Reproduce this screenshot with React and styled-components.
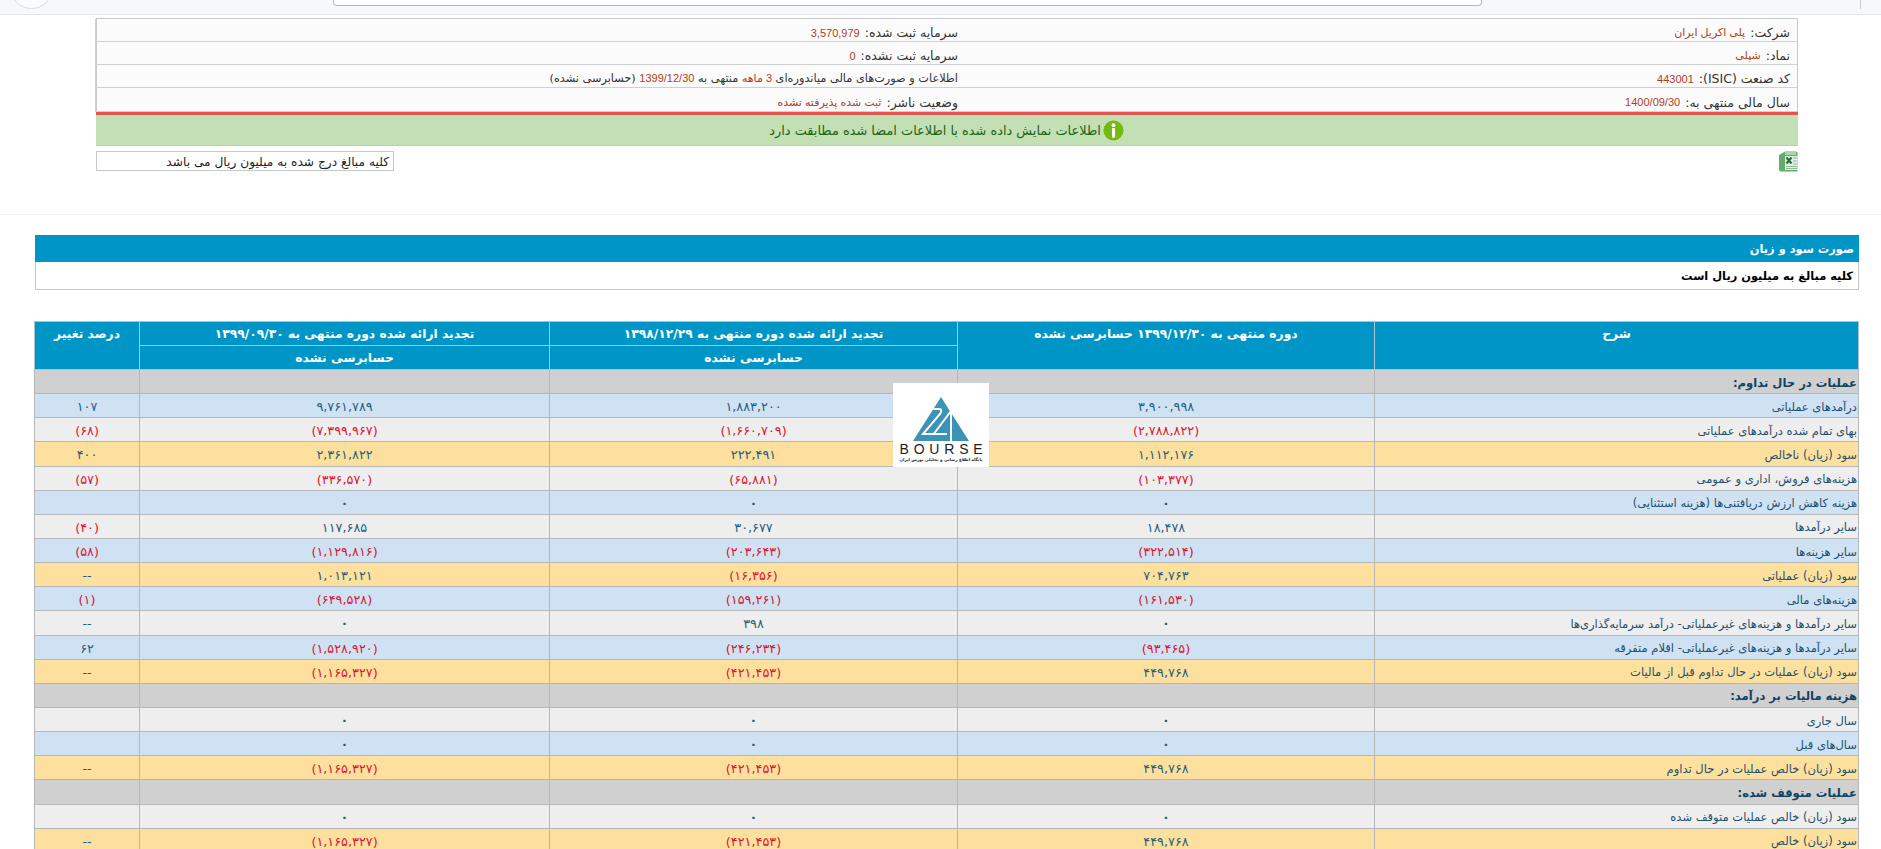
import React from 'react';
import styled, { createGlobalStyle } from 'styled-components';

const GlobalStyle = createGlobalStyle`
    html, body {
        margin: 0;
        padding: 0;
        height: 100%;
        overflow: hidden;
        background: #fff;
    }
    body {
        font-family: "DejaVu Sans", "Liberation Sans", sans-serif;
    }
`

const Page = styled.div`
    width: 1881px;
    height: 849px;
    overflow: hidden;
    direction: rtl;
    position: relative;
`

const BrowserBar = styled.div`
    height: 14px;
    background: #f7f8f9;
    border-bottom: 1px solid #e2e4e6;
    direction: ltr;
    padding-left: 333px;
    position: relative;
    overflow: hidden;
`

const SearchBox = styled.div`
    width: 1147px;
    height: 5px;
    background: #fff;
    border: 1px solid #b4b6b8;
    border-top: none;
    border-radius: 0 0 4px 4px;
`

const RoundButton = styled.div`
    position: absolute;
    left: 10px;
    top: -34px;
    width: 41px;
    height: 41px;
    border: 1px solid #d9dbdd;
    border-radius: 50%;
    background: #fbfbfb;
`

const BarTick = styled.div`
    position: absolute;
    left: 1860px;
    top: 0;
    width: 1px;
    height: 9px;
    background: #c9cbcd;
`

const InfoSection = styled.section`
    margin: 3px 83px 0 96px;
`

const InfoGrid = styled.div`
    display: grid;
    grid-template-columns: 834px 868px;
    grid-template-rows: 23px 23px 23px 24px;
    background: #fbfbfb;
    border: 1px solid #c8c9ca;
    border-bottom: none;
`

const InfoCell = styled.div`
    font-size: 12.5px;
    color: #333;
    display: flex;
    align-items: center;
    gap: 5px;
    padding: 5px ${(p) => (p.$first ? '5px' : '7px')} 0 0;
    border-bottom: 1px solid #cfd0d1;
    border-left: ${(p) => (p.$first ? '1px solid #cfd0d1' : 'none')};
    white-space: nowrap;
`

const InfoValue = styled.span`
    color: #b0401c;
    font-family: "Liberation Sans", "DejaVu Sans", sans-serif;
    font-size: 11px;
`

const InfoText = styled.span`
    font-size: 11.3px;
    color: #333;
`

const RedLine = styled.div`
    height: 3px;
    background: #e2554f;
`

const GreenBar = styled.div`
    height: 30px;
    background: #c2e0b4;
    border-bottom: 1px solid #b6d2a9;
    display: flex;
    align-items: center;
    justify-content: center;
    gap: 2px;
    color: #1f6314;
    font-size: 12.9px;
    padding-right: 1px;
`

const ToolRow = styled.div`
    display: flex;
    justify-content: space-between;
    align-items: flex-start;
    margin-top: 5px;
`

const AmountNote = styled.div`
    width: 298px;
    height: 20px;
    border: 1px solid #c8c9ca;
    background: #fff;
    font-size: 12.2px;
    color: #222;
    line-height: 21px;
    padding-right: 4px;
    box-sizing: border-box;
    white-space: nowrap;
    overflow: hidden;
`

const Divider = styled.hr`
    border: none;
    border-top: 1px solid #eeeeee;
    margin: 42px 0 0;
`

const ReportSection = styled.section`
    margin: 20px 22px 0 35px;
`

const TitleBar = styled.div`
    height: 27px;
    background: #0095c7;
    color: #fff;
    font-size: 11.4px;
    font-weight: bold;
    display: flex;
    align-items: center;
    padding-right: 5px;
`

const SubTitle = styled.div`
    height: 27px;
    border: 1px solid #c4c6c8;
    border-top: none;
    color: #000;
    font-size: 11.4px;
    font-weight: bold;
    display: flex;
    align-items: center;
    padding-right: 5px;
`

const Table = styled.table`
    margin-top: 31px;
    width: 1824px;
    border-collapse: collapse;
    table-layout: fixed;
`

const HeadCell = styled.th`
    background: #0095c7;
    color: #fff;
    font-size: 12.3px;
    font-weight: bold;
    line-height: 16px;
    height: 24px;
    padding: 4px 0 3px;
    box-sizing: border-box;
    border: 1px solid #a9c4d0;
    vertical-align: top;
`

const ROW_COLORS = {
    group: '#d0d0d0',
    blue: '#cfe2f3',
    grey: '#eeeeee',
    gold: '#fde09e',
};

const Row = styled.tr`
    height: 24.15px;
    background: ${(p) => ROW_COLORS[p.$kind]};
`

const LabelCell = styled.td`
    border: 1px solid #b5b7b9;
    padding: 2px 1px 0 0;
    font-size: ${(p) => (p.$group ? '11.6px' : '11.5px')};
    font-weight: ${(p) => (p.$group ? 'bold' : 'normal')};
    color: ${(p) => (p.$group ? '#0f4561' : '#23506c')};
    white-space: nowrap;
    overflow: hidden;
`

const NumCell = styled.td`
    border: 1px solid #b5b7b9;
    padding: 2px 0 0;
    text-align: center;
    font-size: 12.8px;
    font-weight: ${(p) => (p.$zero ? 'bold' : 'normal')};
    color: ${(p) => (p.$neg ? '#e0142e' : '#23607c')};
    white-space: nowrap;
`

const LogoBox = styled.div`
    position: absolute;
    left: 893px;
    top: 383px;
    width: 96px;
    height: 84px;
    background: #fff;
    display: flex;
    flex-direction: column;
    align-items: center;
    direction: ltr;
`

const LogoWord = styled.div`
    font-family: "Liberation Sans", sans-serif;
    font-size: 14px;
    line-height: 12px;
    letter-spacing: 4.8px;
    margin-right: -5px;
    color: #1d1d1d;
    margin-top: 1px;
`

const LogoCaption = styled.div`
    direction: rtl;
    font-size: 4.1px;
    font-weight: bold;
    color: #222;
    margin-top: 2px;
    white-space: nowrap;
`

const rows = [
    ['group', 'عملیات در حال تداوم:'],
    ['blue', 'درآمدهای عملیاتی', '۳,۹۰۰,۹۹۸', '۱,۸۸۳,۲۰۰', '۹,۷۶۱,۷۸۹', '۱۰۷'],
    ['grey', 'بهای تمام شده درآمدهای عملیاتی', '(۲,۷۸۸,۸۲۲)', '(۱,۶۶۰,۷۰۹)', '(۷,۳۹۹,۹۶۷)', '(۶۸)'],
    ['gold', 'سود (زیان) ناخالص', '۱,۱۱۲,۱۷۶', '۲۲۲,۴۹۱', '۲,۳۶۱,۸۲۲', '۴۰۰'],
    ['grey', 'هزینه‌های فروش، اداری و عمومی', '(۱۰۳,۳۷۷)', '(۶۵,۸۸۱)', '(۳۳۶,۵۷۰)', '(۵۷)'],
    ['blue', 'هزینه کاهش ارزش دریافتنی‌ها (هزینه استثنایی)', '۰', '۰', '۰', ''],
    ['grey', 'سایر درآمدها', '۱۸,۴۷۸', '۳۰,۶۷۷', '۱۱۷,۶۸۵', '(۴۰)'],
    ['blue', 'سایر هزینه‌ها', '(۳۲۲,۵۱۴)', '(۲۰۳,۶۴۳)', '(۱,۱۲۹,۸۱۶)', '(۵۸)'],
    ['gold', 'سود (زیان) عملیاتی', '۷۰۴,۷۶۳', '(۱۶,۳۵۶)', '۱,۰۱۳,۱۲۱', '--'],
    ['blue', 'هزینه‌های مالی', '(۱۶۱,۵۳۰)', '(۱۵۹,۲۶۱)', '(۶۴۹,۵۲۸)', '(۱)'],
    ['grey', 'سایر درآمدها و هزینه‌های غیرعملیاتی- درآمد سرمایه‌گذاری‌ها', '۰', '۳۹۸', '۰', '--'],
    ['blue', 'سایر درآمدها و هزینه‌های غیرعملیاتی- اقلام متفرقه', '(۹۳,۴۶۵)', '(۲۴۶,۲۳۴)', '(۱,۵۲۸,۹۲۰)', '۶۲'],
    ['gold', 'سود (زیان) عملیات در حال تداوم قبل از مالیات', '۴۴۹,۷۶۸', '(۴۲۱,۴۵۳)', '(۱,۱۶۵,۳۲۷)', '--'],
    ['group', 'هزینه مالیات بر درآمد:'],
    ['grey', 'سال جاری', '۰', '۰', '۰', ''],
    ['blue', 'سال‌های قبل', '۰', '۰', '۰', ''],
    ['gold', 'سود (زیان) خالص عملیات در حال تداوم', '۴۴۹,۷۶۸', '(۴۲۱,۴۵۳)', '(۱,۱۶۵,۳۲۷)', '--'],
    ['group', 'عملیات متوقف شده:'],
    ['grey', 'سود (زیان) خالص عملیات متوقف شده', '۰', '۰', '۰', ''],
    ['gold', 'سود (زیان) خالص', '۴۴۹,۷۶۸', '(۴۲۱,۴۵۳)', '(۱,۱۶۵,۳۲۷)', '--'],
];

function InfoIcon() {
    return (
        <svg width="21" height="21" viewBox="0 0 22 22">
            <circle cx="11" cy="11" r="10.5" fill="#75b80f" />
            <circle cx="11" cy="5.5" r="2" fill="#fff" />
            <rect x="9.4" y="8.5" width="3.2" height="10" rx="1" fill="#fff" />
        </svg>
    );
}

function ExcelIcon() {
    return (
        <svg width="20" height="21" viewBox="0 0 20 21">
            <path d="M1 4 L7 0.5 H18 Q19.5 0.5 19.5 2 V20.5 H3 Q1 20.5 1 18 Z" fill="#63ad6c" />
            <path d="M7 1 H18 V4 H7 Z" fill="#a9d6ab" />
            <rect x="7" y="5" width="12.5" height="14" fill="#e6efe7" />
            <path d="M8.5 6.5 L13.5 12.5 M13.5 6.5 L8.5 12.5" stroke="#1d6b38" strokeWidth="2" />
            <path d="M15 7 H19 M15 10 H19 M15 13 H19 M8 15.5 H19 M8 17.5 H19" stroke="#8dbb97" strokeWidth="1.1" />
        </svg>
    );
}

function LogoMark() {
    return (
        <svg width="56" height="45" viewBox="0 0 56 45" style={{ marginTop: 14 }}>
            <path d="M28 0 L56 44 H0 Z" fill="#3b93b5" />
            <path d="M16 12 H26 Q30 12 27 17 L10 37 H24" fill="none" stroke="#fff" strokeWidth="2" />
            <path d="M20 38 L38 14 V44 M24 37 H34" fill="none" stroke="#fff" strokeWidth="2" />
        </svg>
    );
}

export default function App() {
    return (
        <Page>
            <GlobalStyle />
            <BrowserBar>
                <RoundButton />
                <SearchBox />
                <BarTick />
            </BrowserBar>

            <InfoSection>
                <InfoGrid>
                    <InfoCell>شرکت: <InfoValue>پلی اکریل ایران</InfoValue></InfoCell>
                    <InfoCell $first>سرمایه ثبت شده: <InfoValue>3,570,979</InfoValue></InfoCell>
                    <InfoCell>نماد: <InfoValue>شپلی</InfoValue></InfoCell>
                    <InfoCell $first>سرمایه ثبت نشده: <InfoValue>0</InfoValue></InfoCell>
                    <InfoCell>کد صنعت (ISIC): <InfoValue>443001</InfoValue></InfoCell>
                    <InfoCell $first>
                        <InfoText>
                            اطلاعات و صورت‌های مالی میاندوره‌ای <InfoValue>3 ماهه</InfoValue> منتهی به <InfoValue>1399/12/30</InfoValue> (حسابرسی نشده)
                        </InfoText>
                    </InfoCell>
                    <InfoCell>سال مالی منتهی به: <InfoValue>1400/09/30</InfoValue></InfoCell>
                    <InfoCell $first>وضعیت ناشر: <InfoValue>ثبت شده پذیرفته نشده</InfoValue></InfoCell>
                </InfoGrid>
                <RedLine />
                <GreenBar>
                    <InfoIcon />
                    اطلاعات نمایش داده شده با اطلاعات امضا شده مطابقت دارد
                </GreenBar>
                <ToolRow>
                    <ExcelIcon />
                    <AmountNote>کلیه مبالغ درج شده به میلیون ریال می باشد</AmountNote>
                </ToolRow>
            </InfoSection>

            <Divider />

            <ReportSection>
                <TitleBar>صورت سود و زیان</TitleBar>
                <SubTitle>کلیه مبالغ به میلیون ریال است</SubTitle>
                <Table>
                    <colgroup>
                        <col style={{ width: 484 }} />
                        <col style={{ width: 417 }} />
                        <col style={{ width: 408 }} />
                        <col style={{ width: 410 }} />
                        <col style={{ width: 105 }} />
                    </colgroup>
                    <thead>
                        <tr>
                            <HeadCell rowSpan={2}>شرح</HeadCell>
                            <HeadCell rowSpan={2}>دوره منتهی به ۱۳۹۹/۱۲/۳۰ حسابرسی نشده</HeadCell>
                            <HeadCell>تجدید ارائه شده دوره منتهی به ۱۳۹۸/۱۲/۲۹</HeadCell>
                            <HeadCell>تجدید ارائه شده دوره منتهی به ۱۳۹۹/۰۹/۳۰</HeadCell>
                            <HeadCell rowSpan={2}>درصد تغییر</HeadCell>
                        </tr>
                        <tr>
                            <HeadCell>حسابرسی نشده</HeadCell>
                            <HeadCell>حسابرسی نشده</HeadCell>
                        </tr>
                    </thead>
                    <tbody>
                        {rows.map(([kind, label, ...nums], i) => (
                            <Row key={i} $kind={kind}>
                                <LabelCell $group={kind === 'group'}>{label}</LabelCell>
                                {(nums.length ? nums : ['', '', '', '']).map((n, j) => (
                                    <NumCell key={j} $neg={n.startsWith('(')} $zero={n === '۰'}>{n}</NumCell>
                                ))}
                            </Row>
                        ))}
                    </tbody>
                </Table>
            </ReportSection>

            <LogoBox>
                <LogoMark />
                <LogoWord>BOURSE</LogoWord>
                <LogoCaption>پایگاه اطلاع رسانی و تحلیلی بورس ایران</LogoCaption>
            </LogoBox>
        </Page>
    );
}
